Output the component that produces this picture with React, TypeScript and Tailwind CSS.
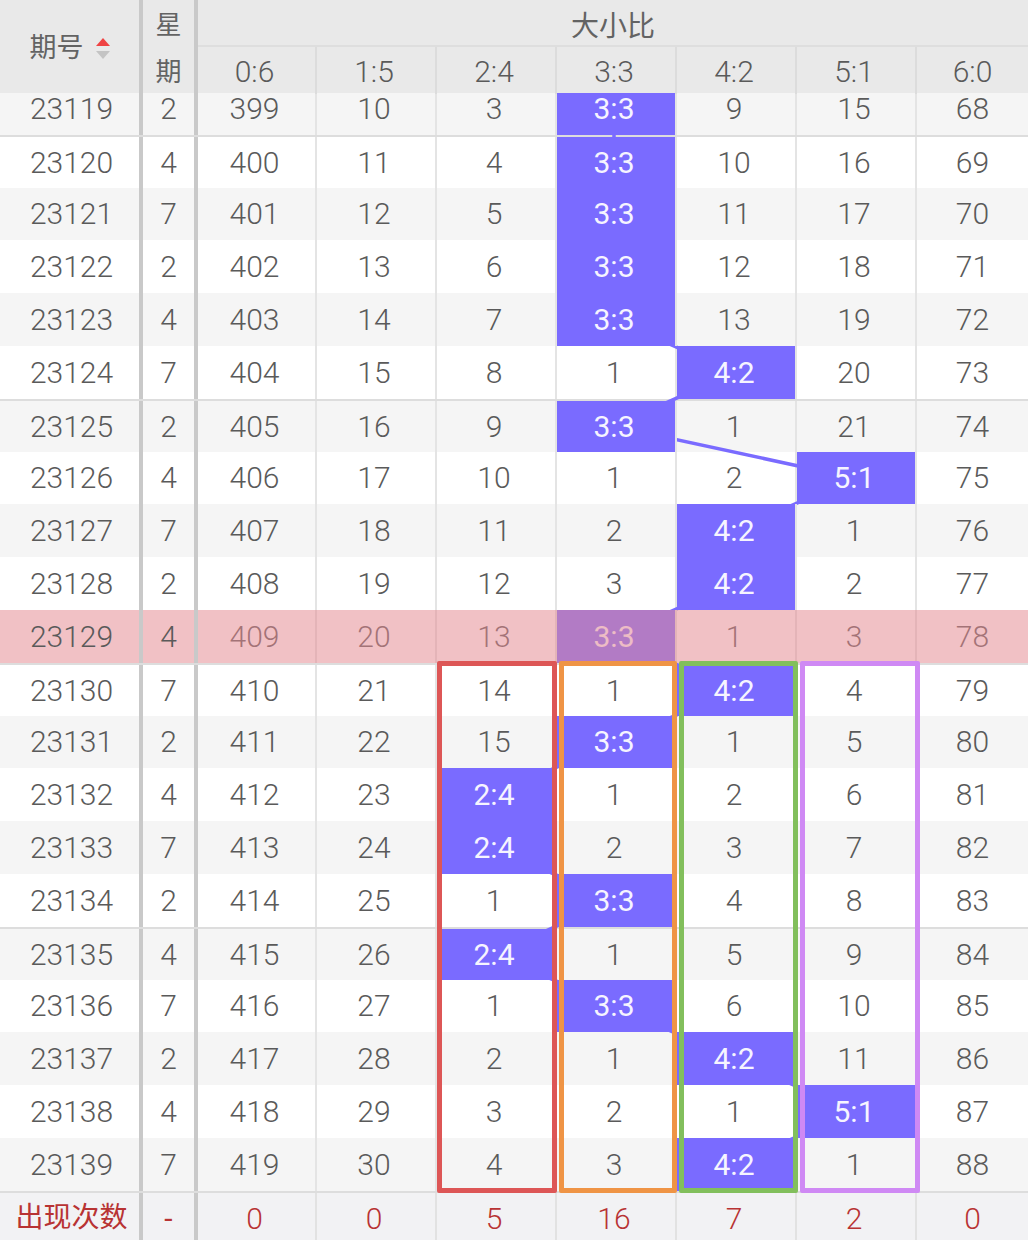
import React from 'react'

const ROW_H = 52.8

const ratios = ['0:6', '1:5', '2:4', '3:3', '4:2', '5:1', '6:0']

// period, week, then the seven ratio columns; a cell holding "x:y" is a hit
const rows: string[][] = [
  ['23119', '2', '399', '10', '3', '3:3', '9', '15', '68'],
  ['23120', '4', '400', '11', '4', '3:3', '10', '16', '69'],
  ['23121', '7', '401', '12', '5', '3:3', '11', '17', '70'],
  ['23122', '2', '402', '13', '6', '3:3', '12', '18', '71'],
  ['23123', '4', '403', '14', '7', '3:3', '13', '19', '72'],
  ['23124', '7', '404', '15', '8', '1', '4:2', '20', '73'],
  ['23125', '2', '405', '16', '9', '3:3', '1', '21', '74'],
  ['23126', '4', '406', '17', '10', '1', '2', '5:1', '75'],
  ['23127', '7', '407', '18', '11', '2', '4:2', '1', '76'],
  ['23128', '2', '408', '19', '12', '3', '4:2', '2', '77'],
  ['23129', '4', '409', '20', '13', '3:3', '1', '3', '78'],
  ['23130', '7', '410', '21', '14', '1', '4:2', '4', '79'],
  ['23131', '2', '411', '22', '15', '3:3', '1', '5', '80'],
  ['23132', '4', '412', '23', '2:4', '1', '2', '6', '81'],
  ['23133', '7', '413', '24', '2:4', '2', '3', '7', '82'],
  ['23134', '2', '414', '25', '1', '3:3', '4', '8', '83'],
  ['23135', '4', '415', '26', '2:4', '1', '5', '9', '84'],
  ['23136', '7', '416', '27', '1', '3:3', '6', '10', '85'],
  ['23137', '2', '417', '28', '2', '1', '4:2', '11', '86'],
  ['23138', '4', '418', '29', '3', '2', '1', '5:1', '87'],
  ['23139', '7', '419', '30', '4', '3', '4:2', '1', '88'],
]

const totals = ['0', '0', '5', '16', '7', '2', '0']

// last column is cut by the screen edge, so it has no right rule and no nudge
const colW = [
  'w-[119px] pr-1 border-r-2',
  'w-[120px] pr-1 border-r-2',
  'w-[120px] pr-1 border-r-2',
  'w-[120px] pr-1 border-r-2',
  'w-[120px] pr-1 border-r-2',
  'w-[120px] pr-1 border-r-2',
  'flex-1',
]
const colLeft = [198, 317, 437, 557, 677, 797, 917]
const colCenter = (k: number) => colLeft[k] + (k === 6 ? 111 : k === 0 ? 117 : 118) / 2 - 2

const PINK = 10

function SortIcon() {
  return (
    <svg width="14" height="24" viewBox="0 0 14 24" className="ml-3">
      <polygon points="7,1 14,9 0,9" fill="#ef4444" />
      <polygon points="0,14 14,14 7,22" fill="#c4c4c4" />
    </svg>
  )
}

function LeftCells({ period, week, red }: { period: string; week: string; red?: boolean }) {
  return (
    <>
      <div
        className={`relative z-[4] flex h-full w-[143px] items-center justify-center border-r-4 border-[#c9c9c9] ${
          red ? 'pl-1 text-[28px] font-normal text-[#b83333]' : 'pl-1'
        }`}
      >
        {period}
      </div>
      <div className={`relative z-[4] flex h-full w-[55px] items-center justify-center border-r-4 border-[#c9c9c9] ${red ? 'text-[#b83333]' : ''}`}>
        {week}
      </div>
    </>
  )
}

export default function App() {
  const points = rows
    .map((r, i) => {
      const k = r.slice(2).findIndex((v) => v.includes(':'))
      const y = i * ROW_H + ROW_H / 2 + (i % 5 === 1 ? 1 : 0)
      return `${colCenter(k)},${y}`
    })
    .join(' ')

  return (
    <div className="h-[1240px] w-[1028px] overflow-hidden bg-white font-[Roboto,'Noto_Sans_CJK_SC',sans-serif] text-[30px] font-light text-[#5a5a5a]">
      {/* header */}
      <div className="relative z-20 flex h-[93px] bg-[#e9e9e9] font-normal text-[#636363]">
        <div className="flex w-[143px] items-center justify-center border-r-4 border-[#c9c9c9] pt-1 text-[27px]">
          期号
          <SortIcon />
        </div>
        <div className="flex w-[55px] flex-col border-r-4 border-[#c9c9c9] text-[26px]">
          <div className="flex h-[47px] items-center justify-center pt-1">星</div>
          <div className="flex flex-1 items-center justify-center pt-1">期</div>
        </div>
        <div className="flex flex-1 flex-col">
          <div className="flex h-[47px] items-center justify-center border-b-2 border-[#dedede] pt-2 text-[28px]">大小比</div>
          <div className="flex flex-1 font-light text-[#5a5a5a]">
            {ratios.map((r, k) => (
              <div key={r} className={`${colW[k]} flex items-center justify-center border-[#dcdcdc] pt-0.5`}>
                {r}
              </div>
            ))}
          </div>
        </div>
      </div>

      {/* body, scrolled a little under the header */}
      <div className="relative -mt-[11px]">
        <svg className="pointer-events-none absolute left-0 top-0 z-[1]" width="1028" height={rows.length * ROW_H}>
          <polyline points={points} fill="none" stroke="#7a6bff" strokeWidth="3.5" />
        </svg>

        {rows.map((r, i) => (
          <div
            key={r[0]}
            className={`relative flex h-[52.8px] ${i % 5 === 1 ? 'border-t-2 border-[#dddddd]' : ''} ${
              i % 2 === 0 && i !== PINK ? 'bg-[#f5f5f5]' : 'bg-white'
            }`}
          >
            <LeftCells period={r[0]} week={r[1]} />
            {r.slice(2).map((v, k) => {
              const hit = v.includes(':')
              return (
                <div
                  key={k}
                  className={`${colW[k]} flex h-full items-center justify-center border-[#e4e4e4] bg-clip-padding ${
                    hit ? 'relative z-[2] bg-[#7a6bff] font-normal text-[#f6f4ff]' : ''
                  }`}
                >
                  {v}
                </div>
              )
            })}
            {i === PINK && <div className="pointer-events-none absolute inset-0 z-[3] bg-[rgba(228,138,145,0.53)]" />}
          </div>
        ))}

        {/* footer totals */}
        <div className="flex h-[52.8px] border-t-2 border-[#dddddd] bg-[#f2f2f4] font-normal text-[#b83333]">
          <LeftCells period="出现次数" week="-" red />
          {totals.map((t, k) => (
            <div key={k} className={`${colW[k]} flex h-full items-center justify-center border-[#e2e2e2] font-light`}>
              {t}
            </div>
          ))}
        </div>

        {/* highlighted column boxes */}
        <div className="pointer-events-none absolute left-[437px] top-[578.8px] z-[5] h-[532px] w-[120px] rounded-[2px] border-[5px] border-[#dd5656]" />
        <div className="pointer-events-none absolute left-[559px] top-[578.8px] z-[5] h-[532px] w-[118px] rounded-[2px] border-[5px] border-[#ef9445]" />
        <div className="pointer-events-none absolute left-[679px] top-[578.8px] z-[5] h-[532px] w-[119px] rounded-[2px] border-[5px] border-[#82bf5c]" />
        <div className="pointer-events-none absolute left-[800px] top-[578.8px] z-[5] h-[532px] w-[120px] rounded-[2px] border-[5px] border-[#cf89f4]" />
      </div>
    </div>
  )
}
